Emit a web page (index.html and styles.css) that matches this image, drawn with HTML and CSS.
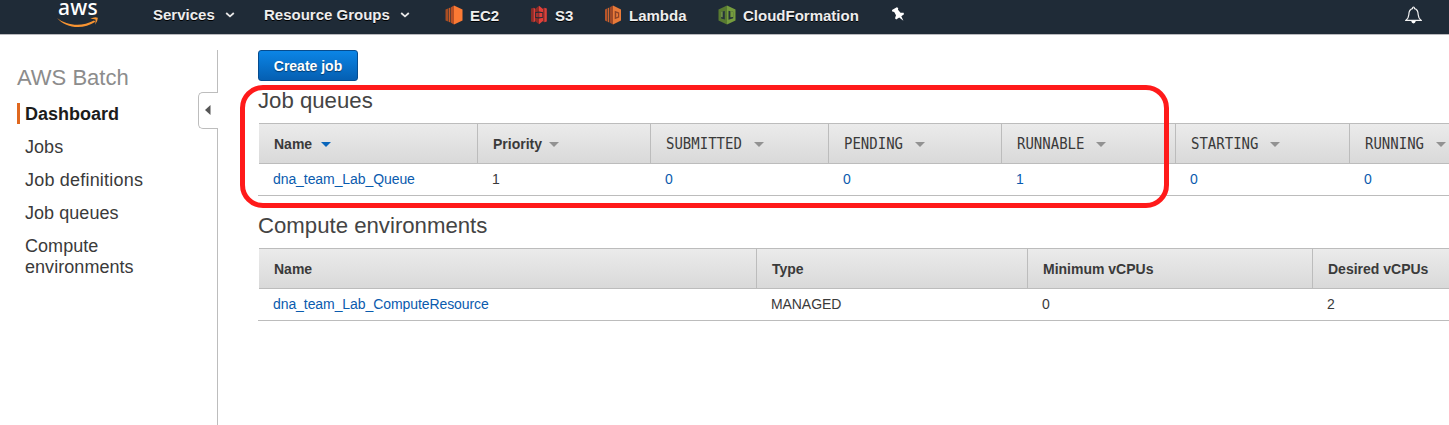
FILE: index.html
```html
<!DOCTYPE html>
<html lang="en">
<head>
<meta charset="utf-8">
<title>AWS Batch</title>
<link rel="stylesheet" href="styles.css">
</head>
<body>
<header class="topbar">
  <div class="logo">
    <span class="logo-text">aws</span>
    <svg class="smile" width="44" height="13" viewBox="0 17 44 13">
      <path d="M1 18C11 26 26 27 38 20.6L39.4 21.8C27 30 10 28.5 1 18Z" fill="#f79432"/>
      <path d="M34.3 18.8Q38.5 16.4 41.8 17.7Q42 21 39 24.8Q39.8 21.5 39.5 19.5Q37.5 18.8 34.3 18.8Z" fill="#f79432"/>
    </svg>
  </div>
  <a class="nav services">Services</a>
  <svg class="chev" width="10" height="6" viewBox="0 0 10 6"><path d="M1.2 1L5 4.4L8.8 1"/></svg>
  <a class="nav groups">Resource Groups</a>
  <svg class="chev" width="10" height="6" viewBox="0 0 10 6"><path d="M1.2 1L5 4.4L8.8 1"/></svg>
  <a class="nav shortcut ec2"><svg width="18" height="20" viewBox="0 0 18 20">
    <path d="M0.5 4.5L3 3.5V16.5L0.5 15.5Z" fill="#a84d22"/><path d="M3.6 3.2L5.4 2.5V17.5L3.6 16.8Z" fill="#c65b28"/><path d="M6 2.2L9 .5V19.5L6 17.8Z" fill="#b95025"/><path d="M9 .5L17.5 4.5V15.5L9 19.5Z" fill="#fb7a34"/>
  </svg>EC2</a>
  <a class="nav shortcut s3"><svg width="18" height="20" viewBox="0 0 18 20">
    <path d="M1 3.5L3.5 2.7V17.3L1 16.5Z" fill="#8c2c27"/><path d="M3.5 2.7L5 3.5V16.5L3.5 17.3Z" fill="#df403a"/><path d="M5 4L9 .7V6.5L5 7.2ZM5 12.8L9 13.5V19.3L5 16Z" fill="#8c2c27"/><path d="M9 .7L13 4V7.2L9 6.5ZM9 13.5L13 12.8V16L9 19.3Z" fill="#df403a"/><path d="M5.8 8L8.8 7.8V12.2L5.8 12Z" fill="#a5322e"/><path d="M9.2 7.8L12.4 8V12L9.2 12.2Z" fill="#df403a"/><path d="M13 3.5L14.3 2.7V17.3L13 16.5Z" fill="#8c2c27"/><path d="M14.3 2.7L16.8 3.5V16.5L14.3 17.3Z" fill="#df403a"/>
  </svg>S3</a>
  <a class="nav shortcut lambda"><svg width="18" height="20" viewBox="0 0 18 20">
    <path d="M1 4.5L3 3.6V16.4L1 15.5Z" fill="#b65329"/><path d="M3.6 3.3L5.2 2.5V17.5L3.6 16.7Z" fill="#ce6530"/><path d="M5.8 2.2L9 .5V19.5L5.8 17.8Z" fill="#9f4928"/><path d="M9 .5L17 4.5V15.5L9 19.5Z" fill="#e97a39"/><path d="M10.7 5.8L15.2 7.5V12.5L10.7 14.2Z" fill="#8d4328"/><path d="M12.2 7.8L14 8.5V11.5L12.2 12.2Z" fill="#e97a39"/>
  </svg>Lambda</a>
  <a class="nav shortcut cf"><svg width="18" height="20" viewBox="0 0 18 20">
    <path d="M.5 4.5L9 .5V19.5L.5 15.5Z" fill="#587a31"/><path d="M9 .5L17.5 4.5V15.5L9 19.5Z" fill="#759c3e"/><path d="M3.2 6.8L6.8 5.9V14.6L3.2 13.6Z" fill="#26343b"/><path d="M3.2 6.8L4.6 6.4V12.2L3.2 12Z" fill="#7fa24c"/><path d="M10.5 5.7L15.2 6.8V13.3L10.5 14.7Z" fill="#26343b"/><path d="M12.4 6L15.2 6.8V12L12.4 12.3Z" fill="#759c3e"/>
  </svg>CloudFormation</a>
  <svg class="pin" width="14" height="15" viewBox="0 0 14 15"><path d="M1 3.1L5.8.2L7.2 1.1L7 2.8L9.5 5.8L12.6 5.8L13 7.3L10.3 9.2L12.4 13.7L8.2 10.5L5.2 12.4L4 11.3L5 8.3L3.2 5L1.2 4.6Z" fill="#fff"/></svg>
  <svg class="bell" width="17" height="18" viewBox="0 0 17 18"><path d="M1 14.3Q3.6 12 3.8 8.7Q4 3.2 7.5 2.6Q7.5 1 8.5 1T9.5 2.6Q13 3.2 13.2 8.7Q13.4 12 16 14.3Z" fill="none" stroke="#f3f3f3" stroke-width="1.2"/><path d="M6.2 15H10.8Q10.3 17.4 8.5 17.4T6.2 15Z" fill="#fff"/></svg>
</header>
<div class="page">
  <aside class="sidebar">
    <h2 class="service">AWS Batch</h2>
    <nav class="menu">
      <a class="item active">Dashboard</a>
      <a class="item">Jobs</a>
      <a class="item spaced">Job definitions</a>
      <a class="item">Job queues</a>
      <a class="item">Compute environments</a>
    </nav>
    <div class="collapse"><svg width="6" height="10" viewBox="0 0 6 10"><path d="M5.5 0V10L0 5Z" fill="#555"/></svg></div>
  </aside>
  <main class="content">
    <button class="create">Create job</button>
    <section class="panel">
      <h1 class="title">Job queues</h1>
      <div class="table">
        <div class="row head queues">
          <div class="cell">Name<i class="caret sorted"></i></div>
          <div class="cell">Priority<i class="caret"></i></div>
          <div class="cell"><span class="mono">SUBMITTED</span><i class="caret wide"></i></div>
          <div class="cell"><span class="mono">PENDING</span><i class="caret wide"></i></div>
          <div class="cell"><span class="mono">RUNNABLE</span><i class="caret wide"></i></div>
          <div class="cell"><span class="mono">STARTING</span><i class="caret wide"></i></div>
          <div class="cell"><span class="mono">RUNNING</span><i class="caret wide"></i></div>
        </div>
        <div class="row body queues">
          <div class="cell link">dna_team_Lab_Queue</div>
          <div class="cell">1</div>
          <div class="cell link">0</div>
          <div class="cell link">0</div>
          <div class="cell link">1</div>
          <div class="cell link">0</div>
          <div class="cell link">0</div>
        </div>
      </div>
      <div class="highlight"></div>
    </section>
    <section class="panel">
      <h1 class="title">Compute environments</h1>
      <div class="table">
        <div class="row head envs">
          <div class="cell">Name</div>
          <div class="cell">Type</div>
          <div class="cell">Minimum vCPUs</div>
          <div class="cell">Desired vCPUs</div>
        </div>
        <div class="row body envs">
          <div class="cell link">dna_team_Lab_ComputeResource</div>
          <div class="cell">MANAGED</div>
          <div class="cell">0</div>
          <div class="cell">2</div>
        </div>
      </div>
    </section>
  </main>
</div>
</body>
</html>
```
FILE: styles.css
```css
* { box-sizing: border-box; }
body {
  margin: 0;
  height: 425px;
  overflow: hidden;
  background: #fff;
  color: #3a3a3a;
  font-family: "Liberation Sans", Arial, sans-serif;
}
h1, h2 { margin: 0; font-weight: normal; }

.topbar {
  display: flex;
  align-items: flex-start;
  height: 35px;
  background: #1f2b37;
  border-bottom: 1px solid #b9b9bd;
}
.logo { display: flex; flex-direction: column; width: 44px; margin-left: 56px; flex: none; }
.logo-text {
  height: 17px;
  padding-left: 2px;
  color: #fff;
  font: 500 21px/14px "Noto Sans", "Open Sans", sans-serif;
  letter-spacing: .3px;
}
.smile { display: block; }
.nav {
  font-size: 15px;
  font-weight: bold;
  line-height: 18px;
  padding-top: 6px;
  color: #eee;
  text-shadow: 0 1px 0 #000;
  white-space: nowrap;
}
.services { width: 62px; margin-left: 53px; }
.groups { width: 126px; margin-left: 29px; }
.chev { margin: 12px 0 0 10px; fill: none; stroke: #e8e8e8; stroke-width: 1.8; flex: none; }
.shortcut { display: flex; gap: 7px; padding-top: 5px; line-height: 21px; flex: none; }
.shortcut svg { flex: none; }
.ec2 { width: 85px; margin-left: 35px; }
.s3 { width: 74px; }
.lambda { width: 114px; }
.cf { width: 173px; }
.pin { margin-top: 7px; flex: none; }
.bell { margin: 6px 27px 0 auto; flex: none; }

.page { display: flex; height: 390px; }
.sidebar {
  position: relative;
  width: 218px;
  flex: none;
  margin-top: 15px;
  padding: 15px 0 0 17px;
  border-right: 1px solid #bdbdbd;
}
.service { font-size: 22px; line-height: 26px; color: #8c8c8c; }
.menu { display: flex; flex-direction: column; gap: 12px; margin-top: 12px; }
.item { width: 150px; padding-left: 8px; font-size: 18px; line-height: 21px; letter-spacing: .05px; }
.item + .item { position: relative; top: 1px; }
.spaced { letter-spacing: .2px; }
.active { padding: 1px 0 0 5px; height: 21px; border-left: 3px solid #e0681f; font-weight: bold; letter-spacing: 0; color: #1c1c1c; }
.collapse {
  position: absolute;
  top: 42px;
  right: -1px;
  width: 20px;
  height: 37px;
  display: flex;
  align-items: center;
  padding: 0 0 2px 6px;
  background: #fff;
  border: 1px solid #bdbdbd;
  border-right: 0;
  border-radius: 5px 0 0 5px;
}

.content { flex: 1; min-width: 0; padding: 15px 0 0 40px; overflow: hidden; }
.create {
  display: block;
  width: 100px;
  height: 31px;
  padding: 1px 0 0;
  border: 1px solid #064c8e;
  border-radius: 3px;
  background: linear-gradient(#0b85e6, #055fb2);
  color: #fff;
  font: bold 14px "Liberation Sans", Arial, sans-serif;
  text-shadow: 0 1px 1px #033a6c;
}
.panel { position: relative; padding-top: 6px; height: 125px; }
.title { height: 36px; font-size: 22.2px; line-height: 28px; color: #444; }
.table { overflow: hidden; }
.row { display: grid; font-size: 14px; }
.queues { grid-template-columns: 219px 173px 178px 173px 174px 174px 174px; }
.envs { grid-template-columns: 498px 271px 285px 285px; }
.head.queues { grid-template-columns: 218px 173px 178px 173px 174px 174px 174px; }
.head.envs { grid-template-columns: 497px 271px 285px 285px; }
.cell { display: flex; align-items: center; padding-left: 15px; white-space: nowrap; }
.head {
  height: 41px;
  margin-left: 1px;
  border-top: 1px solid #bcbcbc;
  border-bottom: 1px solid #bcbcbc;
  background: linear-gradient(#ebebeb, #d9d9d9);
  font-weight: bold;
}
.head .cell + .cell { border-left: 1px solid #bcbcbc; }
.body { height: 32px; padding-bottom: 2px; border-bottom: 1px solid #bcbcbc; letter-spacing: -.08px; }
.link { color: #0a5bae; }
.mono {
  margin-top: -2px;
  font: normal 14px "DejaVu Sans Mono", monospace;
  transform: scaleY(1.13);
}
.caret {
  margin: 2px 0 0 7px;
  border: 5px solid transparent;
  border-top-color: #929292;
  border-bottom: 0;
}
.sorted { margin-left: 9px; border-top-color: #0a66bb; }
.wide { margin-left: 12px; }
.highlight {
  position: absolute;
  left: -18px;
  top: 4px;
  width: 929px;
  height: 123px;
  border: 5px solid #ff1a1a;
  border-radius: 23px;
}
```
